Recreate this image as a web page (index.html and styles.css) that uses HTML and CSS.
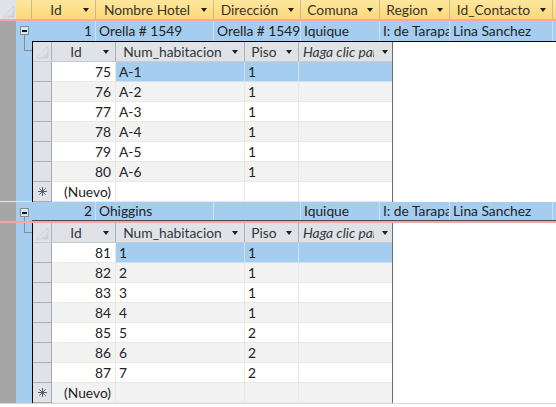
FILE: index.html
```html
<!DOCTYPE html>
<html>
<head>
<meta charset="utf-8">
<link rel="stylesheet" href="styles.css">
</head>
<body>
<div class="sheet">
  <div class="hdr">
    <div class="corner"><svg width="16" height="19" viewBox="0 0 16 19"><defs><linearGradient id="g1" x1="0" y1="0" x2="1" y2="1"><stop offset="0" stop-color="#ffffff"/><stop offset="1" stop-color="#c9ced5"/></linearGradient></defs><polygon points="3,17 14,17 14,6" fill="url(#g1)" stroke="#c3c8ce" stroke-width="0.6"/></svg></div>
    <div class="hexp"></div>
    <div class="hc c1"><span>Id</span><i class="dd"></i></div>
    <div class="hc c2"><span>Nombre Hotel</span><i class="dd"></i></div>
    <div class="hc c3"><span>Dirección</span><i class="dd"></i></div>
    <div class="hc c4"><span>Comuna</span><i class="dd"></i></div>
    <div class="hc c5"><span>Region</span><i class="dd"></i></div>
    <div class="hc c6"><span>Id_Contacto</span><i class="dd"></i></div>
    <div class="hc c7"></div>
  </div>

  <div class="row rec r1">
    <div class="strip"></div>
    <div class="exp"><span class="minus"></span><span class="vline"></span></div>
    <div class="cells">
      <div class="c c1 num">1</div>
      <div class="c c2">Orella # 1549</div>
      <div class="c c3">Orella # 1549</div>
      <div class="c c4">Iquique</div>
      <div class="c c5">I: de Tarapacá</div>
      <div class="c c6">Lina Sanchez</div>
      <div class="c c7"></div>
    </div>
  </div>

  <div class="row subrow s1row">
    <div class="strip"></div>
    <div class="exp"><span class="tree"></span><span class="vfill"></span></div>
    <div class="subarea">
      <div class="sub">
        <div class="sh">
          <div class="scorner"><svg width="18" height="19" viewBox="0 0 18 19"><defs><linearGradient id="g2" x1="0" y1="0" x2="1" y2="1"><stop offset="0" stop-color="#ffffff"/><stop offset="1" stop-color="#c9ced5"/></linearGradient></defs><polygon points="3,16 15,16 15,5" fill="url(#g2)" stroke="#c3c8ce" stroke-width="0.6"/></svg></div>
          <div class="shc w1"><span>Id</span><i class="dd"></i></div>
          <div class="shc w2"><span>Num_habitacion</span><i class="dd"></i></div>
          <div class="shc w3"><span>Piso</span><i class="dd"></i></div>
          <div class="shc w4 add"><span>Haga clic para agregar</span><i class="dd"></i></div>
        </div>
        <div class="sr cur"><div class="sel"></div><div class="d w1 num">75</div><div class="d w2 hl">A-1</div><div class="d w3 hl">1</div><div class="d w4 hl"></div></div>
        <div class="sr alt"><div class="sel"></div><div class="d w1 num">76</div><div class="d w2">A-2</div><div class="d w3">1</div><div class="d w4"></div></div>
        <div class="sr"><div class="sel"></div><div class="d w1 num">77</div><div class="d w2">A-3</div><div class="d w3">1</div><div class="d w4"></div></div>
        <div class="sr alt"><div class="sel"></div><div class="d w1 num">78</div><div class="d w2">A-4</div><div class="d w3">1</div><div class="d w4"></div></div>
        <div class="sr"><div class="sel"></div><div class="d w1 num">79</div><div class="d w2">A-5</div><div class="d w3">1</div><div class="d w4"></div></div>
        <div class="sr alt"><div class="sel"></div><div class="d w1 num">80</div><div class="d w2">A-6</div><div class="d w3">1</div><div class="d w4"></div></div>
        <div class="sr"><div class="sel"><svg class="star" width="9" height="9" viewBox="0 0 9 9"><path d="M4.5 0V9M0 4.5H9M1.3 1.3L7.7 7.7M7.7 1.3L1.3 7.7" stroke="#5f5f5f" stroke-width="1"/></svg></div><div class="d w1 num">(Nuevo)</div><div class="d w2"></div><div class="d w3"></div><div class="d w4"></div></div>
      </div>
      <div class="fill"></div>
    </div>
  </div>

  <div class="row rec r2">
    <div class="strip"></div>
    <div class="exp"><span class="minus"></span><span class="vline"></span></div>
    <div class="cells">
      <div class="c c1 num">2</div>
      <div class="c c2">Ohiggins</div>
      <div class="c c3"></div>
      <div class="c c4">Iquique</div>
      <div class="c c5">I: de Tarapacá</div>
      <div class="c c6">Lina Sanchez</div>
      <div class="c c7"></div>
    </div>
  </div>

  <div class="row subrow s2row">
    <div class="strip"></div>
    <div class="exp"><span class="tree"></span><span class="vfill"></span></div>
    <div class="subarea nt">
      <div class="sub">
        <div class="sh">
          <div class="scorner"><svg width="18" height="19" viewBox="0 0 18 19"><defs><linearGradient id="g3" x1="0" y1="0" x2="1" y2="1"><stop offset="0" stop-color="#ffffff"/><stop offset="1" stop-color="#c9ced5"/></linearGradient></defs><polygon points="3,16 15,16 15,5" fill="url(#g3)" stroke="#c3c8ce" stroke-width="0.6"/></svg></div>
          <div class="shc w1"><span>Id</span><i class="dd"></i></div>
          <div class="shc w2"><span>Num_habitacion</span><i class="dd"></i></div>
          <div class="shc w3"><span>Piso</span><i class="dd"></i></div>
          <div class="shc w4 add"><span>Haga clic para agregar</span><i class="dd"></i></div>
        </div>
        <div class="sr cur"><div class="sel"></div><div class="d w1 num">81</div><div class="d w2 hl">1</div><div class="d w3 hl">1</div><div class="d w4 hl"></div></div>
        <div class="sr alt"><div class="sel"></div><div class="d w1 num">82</div><div class="d w2">2</div><div class="d w3">1</div><div class="d w4"></div></div>
        <div class="sr"><div class="sel"></div><div class="d w1 num">83</div><div class="d w2">3</div><div class="d w3">1</div><div class="d w4"></div></div>
        <div class="sr alt"><div class="sel"></div><div class="d w1 num">84</div><div class="d w2">4</div><div class="d w3">1</div><div class="d w4"></div></div>
        <div class="sr"><div class="sel"></div><div class="d w1 num">85</div><div class="d w2">5</div><div class="d w3">2</div><div class="d w4"></div></div>
        <div class="sr alt"><div class="sel"></div><div class="d w1 num">86</div><div class="d w2">6</div><div class="d w3">2</div><div class="d w4"></div></div>
        <div class="sr"><div class="sel"></div><div class="d w1 num">87</div><div class="d w2">7</div><div class="d w3">2</div><div class="d w4"></div></div>
        <div class="sr alt"><div class="sel"><svg class="star" width="9" height="9" viewBox="0 0 9 9"><path d="M4.5 0V9M0 4.5H9M1.3 1.3L7.7 7.7M7.7 1.3L1.3 7.7" stroke="#5f5f5f" stroke-width="1"/></svg></div><div class="d w1 num">(Nuevo)</div><div class="d w2"></div><div class="d w3"></div><div class="d w4"></div></div>
      </div>
      <div class="fill"></div>
    </div>
  </div>

  <div class="row rec r3">
    <div class="strip"></div>
    <div class="exp"></div>
    <div class="cells">
      <div class="c c1"></div>
      <div class="c c2"></div>
      <div class="c c3"></div>
      <div class="c c4"></div>
      <div class="c c5"></div>
      <div class="c c6"></div>
      <div class="c c7"></div>
    </div>
  </div>
</div>
</body>
</html>
```

FILE: styles.css
```css
* { box-sizing: border-box; margin: 0; padding: 0; }
html, body { width: 556px; height: 407px; overflow: hidden; background: #ffffff; }
body {
  font-family: Lato, "Liberation Sans", sans-serif;
  font-size: 13.8px;
  color: #222222;
  line-height: 19px;
}
.sheet { display: flex; flex-direction: column; width: 556px; }

/* main header */
.hdr {
  display: flex;
  flex: none;
  height: 21px;
  background: linear-gradient(#fde79d, #fcd977);
  border-bottom: 2px solid #f2a6a6;
  color: #3a3428;
}
.corner { width: 16px; flex: none; background: #dfe3e8; }
.hexp { width: 16px; flex: none; border-right: 1px solid #c6bb92; }
.hc {
  display: flex;
  align-items: center;
  flex: none;
  padding-right: 6px;
  border-right: 1px solid #c6bb92;
}
.hc span { flex: 1; min-width: 0; text-align: center; white-space: nowrap; overflow: hidden; }
.dd {
  flex: none;
  width: 0;
  height: 0;
  margin-left: 3px;
  border-left: 3.5px solid transparent;
  border-right: 3.5px solid transparent;
  border-top: 4px solid #1e1e1e;
}
.c1 { width: 64px; flex: none; }
.c2 { width: 118px; flex: none; }
.c3 { width: 87px; flex: none; }
.c4 { width: 79px; flex: none; }
.c5 { width: 70px; flex: none; }
.c6 { width: 103px; flex: none; }
.c7 { flex: 1; border-right: none; }

/* records */
.row { display: flex; flex: none; }
.strip { width: 16px; flex: none; background: #a6a6a6; }
.exp { width: 16px; flex: none; background: #a5cdf0; display: flex; flex-direction: column; }
.cells { flex: 1; display: flex; background: #a5cdf0; }
.c {
  padding: 0 2px 0 3px;
  border-right: 1px solid #cde1f4;
  white-space: nowrap;
  overflow: hidden;
}
.num { text-align: right; }
.c.num { padding-right: 3px; }

.r1 { height: 20px; }
.r1 .c { line-height: 20px; }
.r1 .minus { margin-top: 5px; }

.r2 { height: 21px; border-bottom: 2px solid #f2a6a6; }
.r2 .cells { border-bottom: 1px solid #4a4a4a; }
.r2 .c { line-height: 18px; }
.r2 .minus { margin-top: 6px; }

.minus {
  flex: none;
  width: 9px;
  height: 9px;
  margin-left: 4px;
  border: 1px solid #8a8a8a;
  background: #d3e6f7;
  display: flex;
  align-items: center;
  justify-content: center;
}
.minus::before { content: ""; width: 5px; height: 2px; background: #151515; }
.vline { flex: 1; width: 1px; margin-left: 8px; background: #8a8a8a; }

.r3 { flex: 1; height: 6px; border-top: 1px solid #d8d8d8; }
.r3 .strip { background: #dfe3e8; border-right: 1px solid #b8b8b8; }
.r3 .exp { background: #ffffff; border-right: 1px solid #d8d8d8; }
.r3 .cells { background: #ffffff; }
.r3 .c { border-right-color: #ebe8dd; }

/* subdatasheet rows */
.subrow .tree {
  flex: none;
  width: 8px;
  height: 10px;
  margin-left: 8px;
  border-left: 1px solid #8a8a8a;
  border-bottom: 1px solid #8a8a8a;
}
.vfill { flex: 1; }
.s1row .strip, .s1row .exp { border-bottom: 1px solid #e6e6e6; }

.subarea {
  flex: 1;
  display: flex;
  align-items: flex-start;
  background: #ffffff;
  border-top: 1px solid #000000;
}
.subarea.nt { border-top: none; }
.fill { flex: 1; }
.sub {
  display: flex;
  flex-direction: column;
  flex: none;
  border-left: 1px solid #000000;
  border-right: 1px solid #6c6c6c;
}
.sh {
  display: flex;
  height: 20px;
  background: #dfe3e8;
  border-bottom: 1px solid #c8ccd1;
  color: #353535;
}
.scorner { width: 19px; flex: none; border-right: 1px solid #a9b0b8; }
.shc {
  display: flex;
  align-items: center;
  flex: none;
  padding-right: 6px;
  border-right: 1px solid #a9b0b8;
}
.shc span { flex: 1; min-width: 0; text-align: center; white-space: nowrap; overflow: hidden; }
.shc.add { border-right: none; padding-right: 4px; }
.shc.add span { text-align: left; padding-left: 4px; font-style: italic; }
.shc.add .dd { margin-left: 8px; }
.w1 { width: 64px; flex: none; }
.w2 { width: 129px; flex: none; }
.w3 { width: 54px; flex: none; }
.w4 { width: 93px; flex: none; }

.sr { display: flex; height: 20px; background: #ffffff; }
.sr.alt { background: #f2f2f2; }
.sel {
  width: 19px;
  flex: none;
  background: #dfe3e8;
  border-right: 1px solid #a3aab2;
  border-bottom: 1px solid #aab0b7;
  display: flex;
  align-items: center;
  justify-content: center;
}
.d {
  padding: 0 3px;
  border-right: 1px solid #ebe8dd;
  border-bottom: 1px solid #ebe8dd;
  white-space: nowrap;
  overflow: hidden;
}
.d.w4 { border-right: none; }
.d.w1 { padding-right: 4px; }
.cur .w1 { background: #ffffff; }
.d.hl { background: #a5cdf0; border-right-color: #cde1f4; border-bottom-color: #cde1f4; }
```
